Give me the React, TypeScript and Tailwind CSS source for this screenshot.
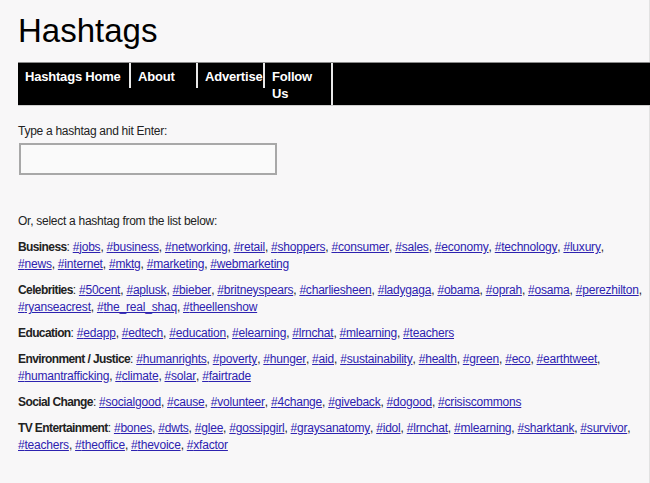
import React from "react";

interface Category {
  name: string;
  tags: string[];
  // index of the tag that starts the second line
  wrapAt?: number;
}

const categories: Category[] = [
  {
    name: "Business",
    tags: ["jobs", "business", "networking", "retail", "shoppers", "consumer", "sales", "economy", "technology", "luxury", "news", "internet", "mktg", "marketing", "webmarketing"],
    wrapAt: 10,
  },
  {
    name: "Celebrities",
    tags: ["50cent", "aplusk", "bieber", "britneyspears", "charliesheen", "ladygaga", "obama", "oprah", "osama", "perezhilton", "ryanseacrest", "the_real_shaq", "theellenshow"],
    wrapAt: 10,
  },
  {
    name: "Education",
    tags: ["edapp", "edtech", "education", "elearning", "lrnchat", "mlearning", "teachers"],
  },
  {
    name: "Environment / Justice",
    tags: ["humanrights", "poverty", "hunger", "aid", "sustainability", "health", "green", "eco", "earthtweet", "humantrafficking", "climate", "solar", "fairtrade"],
    wrapAt: 9,
  },
  {
    name: "Social Change",
    tags: ["socialgood", "cause", "volunteer", "4change", "giveback", "dogood", "crisiscommons"],
  },
  {
    name: "TV Entertainment",
    tags: ["bones", "dwts", "glee", "gossipgirl", "graysanatomy", "idol", "lrnchat", "mlearning", "sharktank", "survivor", "teachers", "theoffice", "thevoice", "xfactor"],
    wrapAt: 10,
  },
];

const navItems = [
  { label: "Hashtags Home", w: "w-[113px]" },
  { label: "About", w: "w-[67px]" },
  { label: "Advertise", w: "w-[67px]" },
  { label: "Follow Us", w: "w-[68px]" },
];

export default function App() {
  return (
    <div className="min-h-[483px] w-[650px] bg-[#f8f7f8] font-['Liberation_Sans',Arial,sans-serif] text-[#222]">
      <div className="pr-[4px] border-r border-[#e2e2e2] min-h-[483px]">
        <h1 className="pl-[18px] pt-[12px] text-[33px] leading-[38px] text-black">Hashtags</h1>

        {/* nav bar */}
        <div className="ml-[18px] mt-[12px] flex items-start bg-black border-t border-t-[#8a8a8a] border-b border-b-[#cfcfcf] -mr-[5px]">
          {navItems.map((item, i) => (
            <div
              key={i}
              className={`${item.w} ${i === 3 ? "self-stretch" : "whitespace-nowrap"} border-r-2 border-[#e8e8e8] px-[7px] pt-[5px] pb-[3px] text-[13px] font-bold leading-[17px] tracking-[-0.2px] text-white`}
            >
              {i === 3 ? (
                <>
                  Follow
                  <br />
                  Us
                </>
              ) : (
                item.label
              )}
            </div>
          ))}
        </div>

        <div className="pl-[18px] pt-[17px] text-[12px] leading-[17px] tracking-[-0.27px]">
          <p>Type a hashtag and hit Enter:</p>
          <input
            type="text"
            className="mt-[3px] ml-[1px] block h-[32px] w-[258px] border-2 border-[#a8a8a8] bg-[#fafafa] outline-none"
          />

          <p className="mt-[38px]">Or, select a hashtag from the list below:</p>

          <div className="mt-[9px] w-[626px]">
            {categories.map((c) => (
              <p key={c.name} className="mb-[9px] whitespace-nowrap">
                <b className="tracking-[-0.6px]">{c.name}</b>:{" "}
                {c.tags.map((t, i) => (
                  <React.Fragment key={t + i}>
                    {i === c.wrapAt && <br />}
                    <a href="#" className="text-[#2d22b0] underline tracking-[-0.2px]">
                      #{t}
                    </a>
                    {i < c.tags.length - 1 ? ", " : ""}
                  </React.Fragment>
                ))}
              </p>
            ))}
          </div>
        </div>
      </div>
    </div>
  );
}
